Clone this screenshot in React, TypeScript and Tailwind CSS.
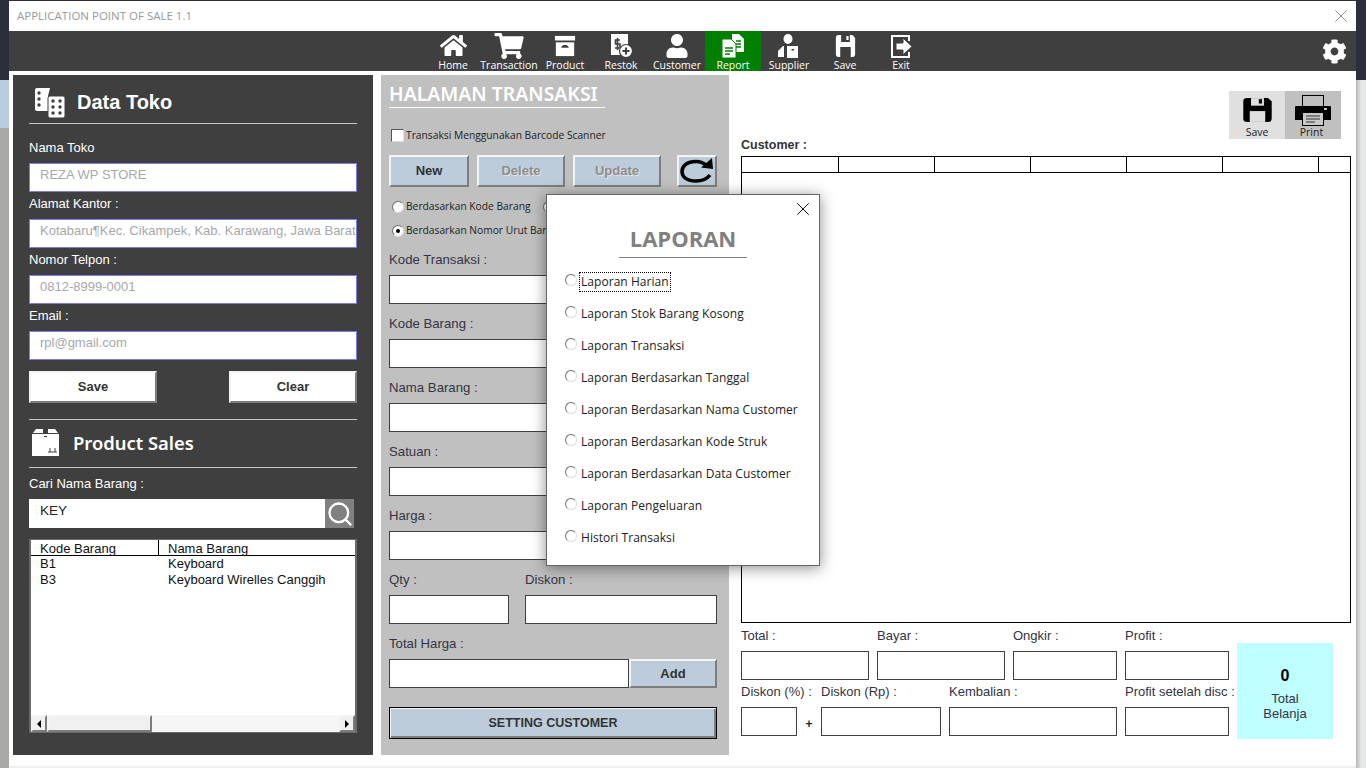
import { FaCog, FaShoppingCart, FaUser, FaHome } from 'react-icons/fa'
import { Search, X } from 'lucide-react'
import type { ReactNode } from 'react'

const raised = 'border-2 border-t-[#f4f4f4] border-l-[#f4f4f4] border-b-[#7d7d7d] border-r-[#7d7d7d]'

function Floppy({ color, hole, className }: { color: string; hole: string; className: string }) {
  return (
    <svg viewBox="0 0 24 24" preserveAspectRatio="none" className={className}>
      <path d="M1 4a3 3 0 0 1 3-3h16l3 3v16a3 3 0 0 1-3 3H4a3 3 0 0 1-3-3z" fill={color} />
      <rect x="7" y="1" width="10" height="7" fill={hole} />
      <rect x="13" y="2" width="2.5" height="4" fill={color} />
      <rect x="6" y="13" width="12" height="10" fill={hole} />
    </svg>
  )
}

function PrinterIcon() {
  return (
    <svg viewBox="0 0 36 31" className="h-[31px] w-[36px]">
      <rect x="7.5" y="0.5" width="21" height="14" fill="none" stroke="#000" strokeWidth="1" />
      <path d="M1 11h34a1 1 0 0 1 1 1v13H0V12a1 1 0 0 1 1-1z" fill="#000" />
      <rect x="29" y="13" width="3" height="2" fill="#c0c0c0" />
      <rect x="7.5" y="17.5" width="21" height="13" fill="#c8c8c8" stroke="#000" strokeWidth="1" />
      <path d="M11 21h14M11 24h14M11 27h9" stroke="#333" strokeWidth="1.2" />
    </svg>
  )
}

function RefreshIcon() {
  return (
    <svg viewBox="0 0 36 26" className="h-[26px] w-[36px]">
      <path d="M27 7C24 4.500 20 3.500 17 3.500 8 3.500 3 8 3 13.500S8 23 17 23c6 0 11-2 14-6" fill="none" stroke="#000" strokeWidth="3.500" />
      <path d="M22 9.500 34 11 33 0z" fill="#000" />
    </svg>
  )
}

function ProductIcon() {
  return (
    <svg viewBox="0 0 24 24" className="h-[22px] w-[22px]">
      <rect x="1" y="1" width="22" height="5" fill="#fff" />
      <path d="M2 8h20v15H2z" fill="#fff" />
      <path d="M8 13l2-2h4l2 2v1H8z" fill="#3f3f3f" />
    </svg>
  )
}

function RestokIcon() {
  return (
    <svg viewBox="0 0 24 24" className="h-[24px] w-[24px]">
      <rect x="2" y="0" width="17" height="21" fill="#fff" />
      <path d="M11 6H6.500v4H11v4H6M8.500 4v12" stroke="#3f3f3f" strokeWidth="1.600" fill="none" />
      <circle cx="17" cy="17" r="6.500" fill="#fff" stroke="#3f3f3f" strokeWidth="1.200" />
      <path d="M13.500 17h7M17 13.500v7" stroke="#3f3f3f" strokeWidth="2" />
    </svg>
  )
}

function ReportIcon() {
  return (
    <svg viewBox="0 0 24 24" className="h-[24px] w-[24px]">
      <path d="M11 0h7l5 5v13H11z" fill="#fff" />
      <path d="M1 5h9l5 5v14H1z" fill="#fff" stroke="#008000" strokeWidth="1" />
      <path d="M4 14h8M4 17h8M4 20h5M15 7h5M15 10h5M15 13h5" stroke="#008000" strokeWidth="1.300" />
    </svg>
  )
}

function SupplierIcon() {
  return (
    <svg viewBox="0 0 24 24" className="h-[24px] w-[24px]">
      <ellipse cx="11" cy="5" rx="4.500" ry="5" fill="#fff" />
      <path d="M1 23v-6l5-5h1v11z" fill="#fff" />
      <path d="M10 12h11v12H10z" fill="#fff" />
      <rect x="14.500" y="15" width="2.500" height="1.500" fill="#3f3f3f" />
    </svg>
  )
}

function ExitIcon() {
  return (
    <svg viewBox="0 0 24 24" className="h-[24px] w-[24px]">
      <path d="M20 7V2H3v21h17v-5" stroke="#fff" strokeWidth="2" fill="none" />
      <path d="M7 9h7V4l9 8.500-9 8.500v-5H7z" fill="#fff" stroke="#3f3f3f" strokeWidth="1" />
    </svg>
  )
}

function DominoIcon() {
  return (
    <svg viewBox="0 0 31 31" className="h-[31px] w-[31px] shrink-0">
      <path d="M1 3a2 2 0 0 1 2-2h13l-2 8v15H3a2 2 0 0 1-2-2z" fill="#fff" />
      <rect x="14" y="9" width="17" height="22" rx="2" fill="#fff" stroke="#3f3f3f" strokeWidth="1" />
      {[[5, 6], [5, 12], [5, 18], [19, 14], [26, 14], [19, 20], [26, 20], [19, 26], [26, 26]].map(([cx, cy]) => (
        <circle key={`${cx}-${cy}`} cx={cx} cy={cy} r="1.700" fill="#3f3f3f" />
      ))}
    </svg>
  )
}

function BoxIcon() {
  return (
    <svg viewBox="0 0 27 27" className="h-[27px] w-[27px] shrink-0">
      <path d="M4 0h19l3 4H1z" fill="#fff" />
      <rect x="0" y="5" width="27" height="22" fill="#fff" />
      <rect x="11" y="0" width="5" height="5" fill="#3f3f3f" />
      <rect x="12" y="7" width="3" height="1" fill="#3f3f3f" />
      <path d="M16 23h9M18 23v-4M23 23v-4" stroke="#3f3f3f" strokeWidth="1" />
    </svg>
  )
}

const navItems: { label: string; icon: ReactNode; active?: boolean }[] = [
  { label: 'Home', icon: <FaHome className="h-[27px] w-[27px] text-white" /> },
  { label: 'Transaction', icon: <FaShoppingCart className="h-[26px] w-[30px] text-white" /> },
  { label: 'Product', icon: <ProductIcon /> },
  { label: 'Restok', icon: <RestokIcon /> },
  { label: 'Customer', icon: <FaUser className="h-[24px] w-[24px] text-white" /> },
  { label: 'Report', icon: <ReportIcon />, active: true },
  { label: 'Supplier', icon: <SupplierIcon /> },
  { label: 'Save', icon: <Floppy color="#fff" hole="#3f3f3f" className="h-[24px] w-[21px]" /> },
  { label: 'Exit', icon: <ExitIcon /> },
]

function ShopField({ label, value }: { label: string; value: string }) {
  return (
    <div>
      <div className="flex h-[24px] items-center pb-[6px] text-[13px] text-white">{label}</div>
      <div className="flex h-[29px] items-center overflow-hidden border border-[#7b7bf0] bg-white pb-[6px] pl-[10px] text-[13px] whitespace-nowrap text-[#a8a8a8]">
        {value}
      </div>
      <div className="h-[3px]" />
    </div>
  )
}

function Radio({ checked }: { checked?: boolean }) {
  return (
    <span className="flex h-[12px] w-[12px] shrink-0 items-center justify-center rounded-full border border-t-[#6f6f6f] border-r-[#dcdcdc] border-b-[#dcdcdc] border-l-[#6f6f6f] bg-white">
      {checked && <span className="h-[4px] w-[4px] rounded-full bg-black" />}
    </span>
  )
}

function FormField({ label }: { label: string }) {
  return (
    <div className="mb-[11px]">
      <div className="flex h-[24px] items-center pb-[6px] text-[13.2px] text-[#333344]">{label}</div>
      <div className="h-[29px] border border-[#404040] bg-white" />
    </div>
  )
}

function SumField({ label, width }: { label: string; width: string }) {
  return (
    <div className={width}>
      <div className="flex h-[24px] items-center pb-[7px] text-[13px] whitespace-nowrap text-[#333344]">{label}</div>
      <div className="h-[29px] border border-[#404040] bg-white" />
    </div>
  )
}

const reports = [
  'Laporan Harian',
  'Laporan Stok Barang Kosong',
  'Laporan Transaksi',
  'Laporan Berdasarkan Tanggal',
  'Laporan Berdasarkan Nama Customer',
  'Laporan Berdasarkan Kode Struk',
  'Laporan Berdasarkan Data Customer',
  'Laporan Pengeluaran',
  'Histori Transaksi',
]

const tableCols = ['w-[97px]', 'w-[96px]', 'w-[96px]', 'w-[96px]', 'w-[96px]', 'w-[96px]', 'flex-1']

export default function App() {
  return (
    <div className="relative flex h-[768px] w-[1366px] overflow-hidden bg-[#f0f0f0] font-['Liberation_Sans',sans-serif]">
      <div className="flex w-[9px] shrink-0 flex-col">
        <div className="h-[80px] bg-[#2a2f3b]" />
        <div className="h-[48px] bg-[#b9cde0]" />
        <div className="flex-1 bg-[#a9aaa8]" />
      </div>

      <div className="flex h-[766px] w-[1347px] shrink-0 flex-col bg-white">
        <div className="h-[1px] bg-[#2a2f3b]" />
        <div className="flex h-[30px] items-center justify-between pr-[4px] pl-[8px] font-['Open_Sans',sans-serif] text-[11.5px] text-[#9a9a9a]">
          <span>APPLICATION POINT OF SALE 1.1</span>
          <X className="h-[22px] w-[22px] text-[#8a8a8a]" strokeWidth={1} />
        </div>

        <div className="flex h-[40px] items-stretch bg-[#3f3f3f] pl-[416px] font-['Open_Sans',sans-serif] text-[10.5px] text-white">
          {navItems.map((item) => (
            <div
              key={item.label}
              className={`flex w-[56px] flex-col items-center justify-end ${item.active ? 'bg-[#008000]' : ''}`}
            >
              <div className="flex h-[27px] items-center">{item.icon}</div>
              <div className="h-[12px] leading-[13px] whitespace-nowrap">{item.label}</div>
            </div>
          ))}
          <div className="ml-auto flex items-center pr-[9px]">
            <FaCog className="h-[25px] w-[25px]" />
          </div>
        </div>

        <div className="flex flex-1 pt-[4px] pl-[4px]">
          {/* data toko + product sales */}
          <div className="h-[680px] w-[360px] shrink-0 bg-[#3f3f3f] px-[16px]">
            <div className="ml-[5px] flex h-[48px] items-center gap-[12px] pt-[6px]">
              <DominoIcon />
              <span className="text-[20px] font-bold text-white">Data Toko</span>
            </div>
            <div className="h-[1px] bg-[#c8c8c8]" />
            <div className="pt-[15px]">
              <ShopField label="Nama Toko" value="REZA WP STORE" />
              <ShopField label="Alamat Kantor :" value="Kotabaru¶Kec. Cikampek, Kab. Karawang, Jawa Barat" />
              <ShopField label="Nomor Telpon :" value="0812-8999-0001" />
              <ShopField label="Email :" value="rpl@gmail.com" />
            </div>
            <div className="mt-[8px] flex justify-between">
              <button className={`h-[32px] w-[128px] bg-white text-[13px] font-bold text-[#333] ${raised}`}>Save</button>
              <button className={`h-[32px] w-[128px] bg-white text-[13px] font-bold text-[#333] ${raised}`}>Clear</button>
            </div>
            <div className="mt-[16px] h-[1px] bg-[#c8c8c8]" />
            <div className="ml-[3px] flex h-[47px] items-center gap-[14px] pb-[2px]">
              <BoxIcon />
              <span className="font-['Noto_Sans',sans-serif] text-[18.4px] font-semibold text-white">Product Sales</span>
            </div>
            <div className="h-[1px] bg-[#c8c8c8]" />
            <div className="flex h-[31px] items-center text-[13px] text-white">Cari Nama Barang :</div>
            <div className="flex h-[29px]">
              <div className="flex w-[296px] items-center bg-white pb-[4px] pl-[11px] text-[13.5px] text-[#222]">KEY</div>
              <div className="flex w-[29px] items-center justify-center bg-[#808080]">
                <Search className="h-[28px] w-[28px] text-white" strokeWidth={2} />
              </div>
            </div>
            <div className="mt-[11px] flex h-[194px] w-[328px] flex-col border-x-2 border-t-[1px] border-b-[1px] border-[#6a6a6a] bg-white text-[13px] text-[#111]">
              <div className="flex h-[16px] border-b border-black leading-[17px]">
                <div className="w-[128px] border-r border-black pl-[9px]">Kode Barang</div>
                <div className="pl-[9px]">Nama Barang</div>
              </div>
              <div className="flex-1">
                <div className="flex h-[16px] leading-[16px]">
                  <div className="w-[128px] pl-[9px]">B1</div>
                  <div className="pl-[9px]">Keyboard</div>
                </div>
                <div className="flex h-[16px] leading-[16px]">
                  <div className="w-[128px] pl-[9px]">B3</div>
                  <div className="pl-[9px]">Keyboard Wirelles Canggih</div>
                </div>
              </div>
              <div className="flex h-[17px] bg-[#f6f6f6]">
                <div className={`flex w-[16px] items-center justify-center bg-[#f0f0f0] ${raised}`}>
                  <span className="h-0 w-0 border-y-[4px] border-r-[4px] border-y-transparent border-r-black" />
                </div>
                <div className={`w-[105px] bg-[#f0f0f0] ${raised}`} />
                <div className="flex-1" />
                <div className={`flex w-[16px] items-center justify-center bg-[#f0f0f0] ${raised}`}>
                  <span className="h-0 w-0 border-y-[4px] border-l-[4px] border-y-transparent border-l-black" />
                </div>
              </div>
            </div>
          </div>

          {/* halaman transaksi */}
          <div className="ml-[8px] h-[680px] w-[348px] shrink-0 bg-[#c0c0c0] px-[8px]">
            <div className="h-[33px] w-[216px] border-b border-white pt-[7px] font-['Noto_Sans',sans-serif] text-[19.4px] leading-[24px] font-semibold whitespace-nowrap text-white">
              HALAMAN TRANSAKSI
            </div>
            <div className="mt-[20px] flex h-[14px] items-center gap-[2px] pl-[2px] font-['Open_Sans',sans-serif] text-[10.25px] text-[#222]">
              <span className="h-[13px] w-[13px] border border-t-[#555] border-r-[#ddd] border-b-[#ddd] border-l-[#555] bg-white" />
              <span className="mt-[2px]">Transaksi Menggunakan Barcode Scanner</span>
            </div>
            <div className="mt-[13px] flex h-[32px] text-[13px] font-bold">
              <button className={`w-[80px] bg-[#bdccda] text-[#333] ${raised}`}>New</button>
              <button className={`ml-[8px] w-[88px] bg-[#bdccda] text-[#8d8d8d] [text-shadow:1px_1px_0_#e4e4e4] ${raised}`}>Delete</button>
              <button className={`ml-[8px] w-[88px] bg-[#bdccda] text-[#8d8d8d] [text-shadow:1px_1px_0_#e4e4e4] ${raised}`}>Update</button>
              <button className={`ml-[16px] flex w-[40px] items-center justify-center bg-[#bdccda] ${raised}`}>
                <RefreshIcon />
              </button>
            </div>
            <div className="mt-[13px] flex h-[14px] items-center font-['Open_Sans',sans-serif] text-[10.25px] whitespace-nowrap text-[#222]">
              <span className="flex items-center gap-[2px] pl-[3px]">
                <Radio />
                Berdasarkan Kode Barang
              </span>
              <span className="ml-[12px] flex items-center gap-[2px]">
                <Radio />
                Berdasarkan Nama Barang
              </span>
            </div>
            <div className="mt-[10px] flex h-[14px] items-center gap-[2px] pl-[3px] font-['Open_Sans',sans-serif] text-[10.25px] text-[#222]">
              <Radio checked />
              Berdasarkan Nomor Urut Barang
            </div>
            <div className="mt-[13px]">
              <FormField label="Kode Transaksi :" />
              <FormField label="Kode Barang :" />
              <FormField label="Nama Barang :" />
              <FormField label="Satuan :" />
              <FormField label="Harga :" />
              <div className="flex gap-[16px]">
                <div className="w-[120px]">
                  <FormField label="Qty :" />
                </div>
                <div className="w-[192px]">
                  <FormField label="Diskon :" />
                </div>
              </div>
              <div className="flex items-end">
                <div className="w-[240px]">
                  <div className="flex h-[24px] items-center pb-[6px] text-[13.2px] text-[#333344]">Total Harga :</div>
                  <div className="h-[29px] border border-[#404040] bg-white" />
                </div>
                <button className={`h-[29px] w-[88px] bg-[#bdccda] text-[13px] font-bold text-[#333] ${raised}`}>Add</button>
              </div>
            </div>
            <button className="mt-[19px] h-[32px] w-[328px] border border-black bg-[#bdccda] text-[12.5px] font-bold text-[#333] shadow-[inset_1px_1px_0_#f4f4f4,inset_-2px_-2px_0_#7d7d7d]">
              SETTING CUSTOMER
            </button>
          </div>

          {/* nota */}
          <div className="h-[680px] flex-1 pl-[12px]">
            <div className="mt-[16px] flex h-[48px] justify-end pr-[15px] font-['Open_Sans',sans-serif] text-[10.5px] text-[#222]">
              <div className="flex w-[56px] flex-col items-center bg-[#e0e0e0] pt-[6px]">
                <Floppy color="#000" hole="#e0e0e0" className="h-[27px] w-[31px]" />
                <span className="mt-[2px] leading-[14px]">Save</span>
              </div>
              <div className="flex w-[56px] flex-col items-center bg-[#c0c0c0] pt-[4px]">
                <PrinterIcon />
                <span className="pr-[3px] leading-[12px]">Print</span>
              </div>
            </div>
            <div className="flex h-[17px] items-center pb-[4px] text-[12.5px] font-bold text-[#333]">Customer :</div>
            <div className="flex h-[467px] w-[610px] flex-col border border-black bg-white">
              <div className="flex h-[16px] border-b border-black">
                {tableCols.map((col, i) => (
                  <div key={i} className={`${col} ${i < 6 ? 'border-r border-black' : ''}`} />
                ))}
              </div>
            </div>
            <div className="relative mt-[4px] flex w-[592px] gap-[8px]">
              <div className="flex-none">
                <div className="flex gap-[8px]">
                  <SumField label="Total :" width="w-[128px]" />
                  <SumField label="Bayar :" width="w-[128px]" />
                  <SumField label="Ongkir :" width="w-[104px]" />
                  <SumField label="Profit :" width="w-[104px]" />
                </div>
                <div className="mt-[3px] flex">
                  <SumField label="Diskon (%) :" width="w-[56px]" />
                  <div className="flex w-[24px] items-end justify-center pb-[3px] text-[12px] font-bold text-[#222]">+</div>
                  <SumField label="Diskon (Rp) :" width="w-[120px]" />
                  <div className="w-[8px]" />
                  <SumField label="Kembalian :" width="w-[168px]" />
                  <div className="w-[8px]" />
                  <SumField label="Profit setelah disc :" width="w-[104px]" />
                </div>
              </div>
              <div className="mt-[16px] flex h-[96px] w-[96px] flex-col items-center justify-center bg-[#c0ffff] pt-[5px] text-[13px] leading-[15px] text-[#333344]">
                <span className="mb-[5px] text-[16px] leading-[20px] font-bold text-black">0</span>
                <span>Total</span>
                <span>Belanja</span>
              </div>
            </div>
          </div>
        </div>
      </div>

      <div className="flex w-[10px] shrink-0 flex-col">
        <div className="h-[80px] bg-[#2a2f3b]" />
        <div className="flex-1 bg-linear-to-r from-[#b5b5b5] via-[#e6e8e8] to-[#e6e8e8]" />
      </div>

      {/* laporan dialog */}
      <div className="absolute top-[194px] left-[546px] h-[372px] w-[274px] border border-[#646464] bg-white font-['Open_Sans',sans-serif] shadow-[0_2px_14px_rgba(0,0,0,0.45)]">
        <X className="absolute top-[3px] right-[5px] h-[22px] w-[22px] text-black" strokeWidth={1} />
        <div className="mx-auto mt-[30px] h-[33px] w-[128px] border-b border-[#808080] text-center text-[22px] leading-[26px] font-bold text-[#808080]">
          LAPORAN
        </div>
        <div className="mt-[8px] flex flex-col pl-[18px] text-[12px] tracking-[0.05px] text-[#222]">
          {reports.map((name, i) => (
            <div key={name} className="flex h-[32px] items-center gap-[2px]">
              <span className="-mt-[4px]">
                <Radio />
              </span>
              <span className={i === 0 ? 'border border-dotted border-black px-[1px] leading-[18px]' : 'border border-transparent px-[1px] leading-[18px]'}>
                {name}
              </span>
            </div>
          ))}
        </div>
      </div>
    </div>
  )
}
